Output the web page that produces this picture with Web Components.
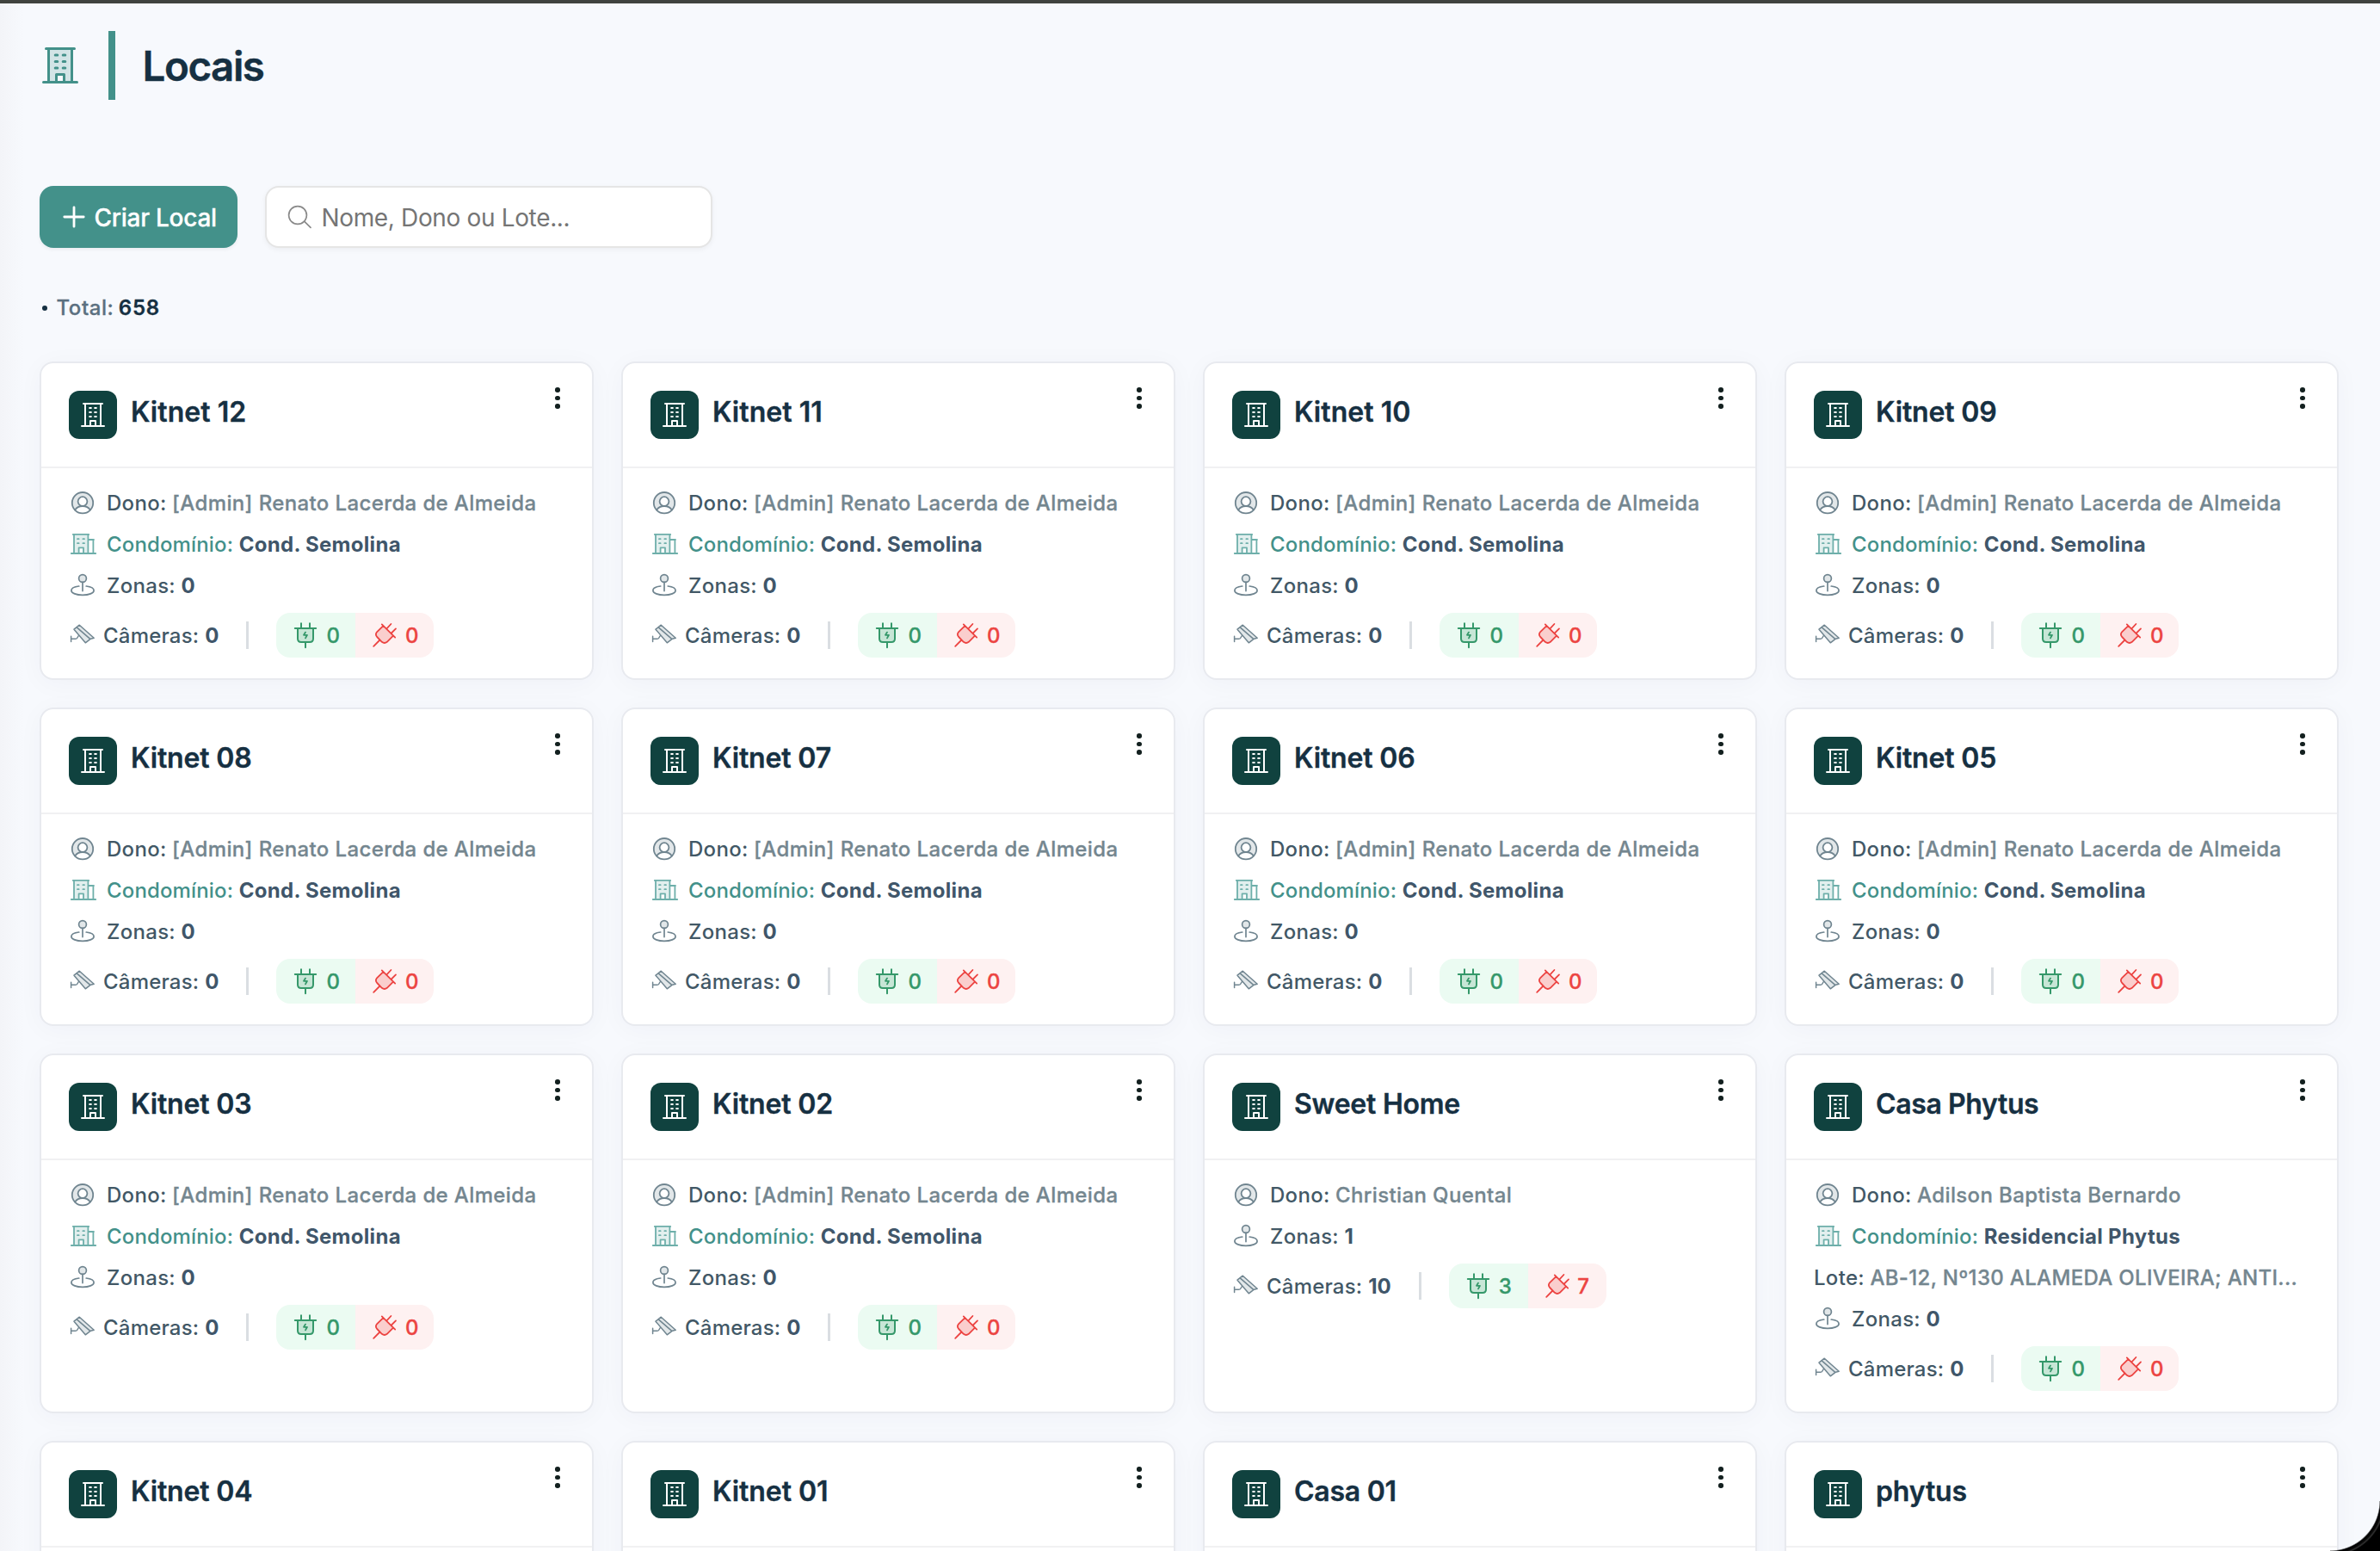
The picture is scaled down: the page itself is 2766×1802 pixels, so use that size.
<!DOCTYPE html>
<html lang="pt-BR">
<head>
<meta charset="utf-8">
<title>Locais</title>
<style>
  html, body { margin: 0; height: 1802px; overflow: hidden; background: #f7f9fd; }
  body { font-family: Inter, "Liberation Sans", sans-serif; color: #163042; }
</style>
</head>
<body>
<locais-page></locais-page>
<script>
const BUILDING = `<path d="M4.5 1.5H37.5M1.5 40.5H40.5M7.5 1.5V40.5M34.5 1.5V40.5M16.5 40.5V31.5H25.5V40.5"/><path d="M15.2 9H17.8M24.2 9H26.8M15.2 16.5H17.8M24.2 16.5H26.8M15.2 24H17.8M24.2 24H26.8"/>`;
const ICONS = {
  building: ['0 0 42 42', 3, `<path class="tone" d="M7.5 1.5H34.5V40.5H25.5V31.5H16.5V40.5H7.5Z"/>${BUILDING}`],
  'building-line': ['0 0 42 42', 3, BUILDING],
  plus: ['0 0 28 28', 2.8, `<path d="M14 2.8V25.2M2.8 14H25.2"/>`],
  search: ['0 0 28 28', 1.7, `<circle cx="12" cy="12" r="10.4"/><path d="M19.6 19.2L27 26.4"/>`],
  user: ['0 0 32 32', 1.8, `<path class="tone" fill-rule="evenodd" d="M16 4a12.2 12.2 0 0 1 8.8 20.5C23 21.6 20 20 16 20S9 21.6 7.2 24.5A12.2 12.2 0 0 1 16 4Z"/><circle cx="16" cy="16.2" r="12.2"/><circle cx="16" cy="14.6" r="5.4" style="fill:#fff"/><path d="M7.2 24.5C9 21.6 12 20 16 20s7 1.6 8.8 4.5"/>`],
  condo: ['0 0 32 32', 1.8, `<path class="tone" d="M6 5H22.4V27H17V20.4H11.6V27H6Z"/><path d="M4.8 4.9H23.2M2.8 27H31.2M6 4.9V27M22.4 4.9V27M22.4 11H28.4V27M27.6 11H29M11.6 27V20.4H17V27"/><path d="M10 10.2H11.6M16.4 10.2H18M10 15.2H11.6M16.4 15.2H18"/>`],
  zone: ['0 0 32 32', 1.7, `<circle class="tone" cx="16" cy="8" r="4.4"/><circle cx="16" cy="8" r="4.4"/><path d="M16 12.4V22.6M11.8 17C6.4 17.7 2.9 19.5 2.9 22C2.9 25.2 8.8 27.3 16 27.3S29.1 25.2 29.1 22C29.1 19.5 25.6 17.7 20.2 17"/>`],
  camera: ['0 0 32 32', 1.5, `<path class="tone" d="M12.3 4.2L6 9.2L19.3 24.8L25.4 20.2L29 19.4Z"/><path d="M12.3 4.2L6 9.2L19.3 24.8L25.4 20.2L29.2 19.3L12.3 4.2M9.2 6.9L24.8 20.4M2.6 17.2V23.6M2.6 20.3H7.6Q9.2 20.3 9.9 19L11 17"/>`],
  plug: ['0 0 28 30', 2, `<path class="tone" d="M5 7H23V19Q23 23 19 23H9Q5 23 5 19Z"/><path d="M9 1.2V7M19 1.2V7M1.8 7H26.2M5 7V19Q5 23 9 23H19Q23 23 23 19V7M14 23V29.2"/><path d="M14 11.6L12 14.8H16L14 18.4" stroke-width="1.8"/>`],
  unplug: ['0 0 28 28', 1.8, `<path class="tone" d="M12.4 3.1L5.2 10.2Q2.6 13 5.2 16L10.8 21.8Q13.8 24.2 16.8 21.8L24 14.7Z"/><path d="M1.2 26.8L8 20M10.8 1.4L26.2 16.6M12.4 3.1L5.2 10.2Q2.6 13 5.2 16L10.8 21.8Q13.8 24.2 16.8 21.8L24 14.7M16.2 6.6L21.4 1M21.4 12L27 6.4"/>`]
};

class UiIcon extends HTMLElement {
  connectedCallback() {
    const [box, weight, body] = ICONS[this.getAttribute('name')];
    this.attachShadow({ mode: 'open' }).innerHTML = `
      <style>
        :host { display: block; flex: none; width: 32px; height: 32px; }
        svg { display: block; width: 100%; height: 100%; overflow: visible; }
        .tone { fill: currentColor; fill-opacity: .2; stroke: none; }
      </style>
      <svg viewBox="${box}" fill="none" stroke="currentColor" stroke-width="${weight}" stroke-linecap="round" stroke-linejoin="round">${body}</svg>`;
  }
}
customElements.define('ui-icon', UiIcon);

class PageHeader extends HTMLElement {
  connectedCallback() {
    this.attachShadow({ mode: 'open' }).innerHTML = `
      <style>
        :host { display: flex; align-items: center; height: 80px; }
        ui-icon { width: 42px; height: 42px; margin: 0 35px 0 3px; color: #43918a; }
        i { width: 8px; height: 80px; background: #43918a; }
        h1 { margin: 2px 0 0 31.5px; font-size: 47.5px; line-height: 64px; font-weight: 600; letter-spacing: -1.45px; -webkit-text-stroke: .4px; }
      </style>
      <ui-icon name="building"></ui-icon><i></i><h1><slot></slot></h1>`;
  }
}
customElements.define('page-header', PageHeader);

class ActionButton extends HTMLElement {
  connectedCallback() {
    this.attachShadow({ mode: 'open' }).innerHTML = `
      <style>
        :host { display: flex; align-items: center; box-sizing: border-box; width: 230px; height: 72px; padding-left: 26px; gap: 9.5px;
          border-radius: 16px; background: #43918a; color: #fff; font-size: 28px; font-weight: 500; letter-spacing: -.25px;
          -webkit-text-stroke: .3px; white-space: nowrap; box-shadow: 0 2px 4px rgba(0,0,0,.06); }
        span { padding-top: 1px; }
        ui-icon { width: 28px; height: 28px; }
      </style>
      <ui-icon name="plus"></ui-icon><span><slot></slot></span>`;
  }
}
customElements.define('action-button', ActionButton);

class SearchField extends HTMLElement {
  connectedCallback() {
    this.attachShadow({ mode: 'open' }).innerHTML = `
      <style>
        :host { display: flex; align-items: center; box-sizing: border-box; width: 520px; height: 72px; padding-left: 24px; gap: 11.5px;
          border: 2px solid #e5e5e5; border-radius: 16px; background: #fff; color: #757575; font-size: 28px;
          letter-spacing: -.35px; white-space: nowrap; box-shadow: 0 2px 6px rgba(0,0,0,.05); }
        span { padding-top: 2px; }
        ui-icon { width: 28px; height: 28px; color: #8a8a8a; }
      </style>
      <ui-icon name="search"></ui-icon><span><slot></slot></span>`;
  }
}
customElements.define('search-field', SearchField);

class TotalCount extends HTMLElement {
  connectedCallback() {
    this.attachShadow({ mode: 'open' }).innerHTML = `
      <style>
        :host { display: flex; align-items: center; height: 40px; font-size: 24px; font-weight: 500; letter-spacing: .55px; color: #5b7080; -webkit-text-stroke: .3px; }
        i { width: 6px; height: 6px; border-radius: 50%; background: #163042; margin: 4px 10.5px 0 3px; }
        span, b { padding-top: 2px; }
        b { font-weight: 600; color: #163042; margin-left: 5.5px; letter-spacing: .8px; }
      </style>
      <i></i><span>Total:</span><b><slot></slot></b>`;
  }
}
customElements.define('total-count', TotalCount);

class InfoRow extends HTMLElement {
  connectedCallback() {
    const icon = this.getAttribute('icon');
    this.attachShadow({ mode: 'open' }).innerHTML = `
      <style>
        :host { display: flex; align-items: center; height: 48px; font-size: 24px; line-height: 46px; white-space: nowrap; }
        ui-icon { color: #708590; margin-right: 12px; }
        span { padding-top: 2px; }
        .label { font-weight: 500; letter-spacing: .3px; color: #425866; margin-right: 6.5px; }
        .value { font-weight: 500; letter-spacing: .38px; color: #74868f; -webkit-text-stroke: .3px; }
        :host([strong]) .value { font-weight: 700; letter-spacing: .3px; color: #40566a; -webkit-text-stroke: 0; }
        :host([icon="condo"]) ui-icon { color: #6eafaa; }
        :host([icon="condo"]) .label { color: #43918a; letter-spacing: .15px; }
        :host([label="Lote:"]) .value { letter-spacing: .33px; }
      </style>
      ${icon ? `<ui-icon name="${icon}"></ui-icon>` : ''}<span class="label">${this.getAttribute('label')}</span><span class="value"><slot></slot></span>`;
  }
}
customElements.define('info-row', InfoRow);

class CameraStatus extends HTMLElement {
  connectedCallback() {
    const a = n => this.getAttribute(n);
    this.attachShadow({ mode: 'open' }).innerHTML = `
      <style>
        :host { display: flex; align-items: center; height: 52px; margin-top: 8px; font-size: 24px; line-height: 50px; font-weight: 500; white-space: nowrap; }
        .icon { color: #708590; margin-right: 8px; }
        .label { letter-spacing: .2px; color: #425866; margin-right: 7px; padding-top: 2px; }
        b { font-weight: 700; color: #40566a; padding-top: 2px; }
        i { width: 3px; height: 32px; margin: 0 32px; background: #dadee2; }
        .pill { display: flex; height: 52px; border-radius: 16px; overflow: hidden; }
        .pill span { display: flex; align-items: center; box-sizing: border-box; padding-left: 20px; gap: 10px; width: 92px; -webkit-text-stroke: .3px; }
        .pill em { font-style: normal; padding-top: 2px; }
        .on { background: #ebfbf2; color: #35986a; }
        .pill .off { background: #fef1f1; color: #ec4442; width: 91px; gap: 9.5px; }
        .on ui-icon { width: 28px; height: 30px; }
        .off ui-icon { width: 28px; height: 28px; }
      </style>
      <ui-icon class="icon" name="camera"></ui-icon><span class="label">Câmeras:</span><b>${a('total')}</b><i></i>
      <div class="pill"><span class="on"><ui-icon name="plug"></ui-icon><em>${a('on')}</em></span><span class="off"><ui-icon name="unplug"></ui-icon><em>${a('off')}</em></span></div>`;
  }
}
customElements.define('camera-status', CameraStatus);

class LocalCard extends HTMLElement {
  connectedCallback() {
    this.attachShadow({ mode: 'open' }).innerHTML = `
      <style>
        :host { display: block; box-sizing: border-box; border: 2px solid #e8eaef; border-radius: 16px; background: #fff;
          box-shadow: 0 4px 30px rgba(20,30,80,.035); min-height: 370px; }
        header { display: flex; box-sizing: border-box; height: 122px; padding: 32px 0 0 32px; border-bottom: 2px solid #f1f1f2; }
        .tile { display: flex; align-items: center; justify-content: center; width: 56px; height: 56px; border-radius: 12px; background: #10423f; color: #fff; }
        .tile ui-icon { width: 28px; height: 28px; }
        h2 { margin: 1px 0 0 16px; font-size: 32px; line-height: 48px; font-weight: 600; letter-spacing: var(--title-spacing, -.1px); -webkit-text-stroke: .35px; }
        .menu { display: flex; flex-direction: column; gap: 4px; margin: -4px 37px 0 auto; }
        .menu i { width: 5.6px; height: 5.6px; border-radius: 50%; background: #13201f; }
        section { padding: 16px 0 24px 32px; }
      </style>
      <header><div class="tile"><ui-icon name="building-line"></ui-icon></div><h2>${this.getAttribute('name')}</h2><div class="menu"><i></i><i></i><i></i></div></header>
      <section><slot></slot></section>`;
  }
}
customElements.define('local-card', LocalCard);

const ADMIN = '[Admin] Renato Lacerda de Almeida', COND = 'Cond. Semolina';
const kitnet = n => ({ name: 'Kitnet ' + n, owner: ADMIN, condo: COND, zones: 0, cams: [0, 0, 0], spacing: n > 9 ? '.05px' : '-.15px' });
const LOCAIS = [
  ...['12', '11', '10', '09', '08', '07', '06', '05', '03', '02'].map(kitnet),
  { name: 'Sweet Home', owner: 'Christian Quental', zones: 1, cams: [10, 3, 7], spacing: '-.25px' },
  { name: 'Casa Phytus', owner: 'Adilson Baptista Bernardo', condo: 'Residencial Phytus', lot: 'AB-12, Nº130 ALAMEDA OLIVEIRA; ANTI...', zones: 0, cams: [0, 0, 0], spacing: '-.38px' },
  { name: 'Kitnet 04', spacing: '-.15px' }, { name: 'Kitnet 01', spacing: '-.05px' }, { name: 'Casa 01', spacing: '-.25px' }, { name: 'phytus', spacing: '-.15px' }
];

class LocaisPage extends HTMLElement {
  connectedCallback() {
    const cards = LOCAIS.map(c => `<local-card name="${c.name}"${c.spacing ? ` style="--title-spacing:${c.spacing}"` : ''}>${c.owner ? `
      <info-row icon="user" label="Dono:">${c.owner}</info-row>
      ${c.condo ? `<info-row icon="condo" label="Condomínio:" strong>${c.condo}</info-row>` : ''}
      ${c.lot ? `<info-row label="Lote:">${c.lot}</info-row>` : ''}
      <info-row icon="zone" label="Zonas:" strong>${c.zones}</info-row>
      <camera-status total="${c.cams[0]}" on="${c.cams[1]}" off="${c.cams[2]}"></camera-status>` : ''}</local-card>`).join('');
    this.attachShadow({ mode: 'open' }).innerHTML = `
      <style>
        :host { display: block; position: relative; box-sizing: border-box; width: 2766px; height: 1802px; overflow: hidden;
          border-top: 4px solid #40433f; padding: 32px 48px 0 46px;
          background: linear-gradient(90deg, #f3f4f8, #f7f9fd 28px); }
        .tools { display: flex; gap: 32px; margin-top: 100px; }
        total-count { margin-top: 48px; }
        .grid { display: grid; grid-template-columns: repeat(4, 644px); gap: 32px; margin-top: 44px; }
        .corner { position: absolute; right: 0; bottom: 0; width: 58px; height: 58px;
          background: radial-gradient(circle at 0 0, transparent 57px, #000 58.5px, #0b0b0b 61px, #333 62.5px, #000 64px); }
      </style>
      <page-header>Locais</page-header>
      <div class="tools"><action-button>Criar Local</action-button><search-field>Nome, Dono ou Lote...</search-field></div>
      <total-count>658</total-count>
      <div class="grid">${cards}</div>
      <div class="corner"></div>`;
  }
}
customElements.define('locais-page', LocaisPage);
</script>
</body>
</html>
